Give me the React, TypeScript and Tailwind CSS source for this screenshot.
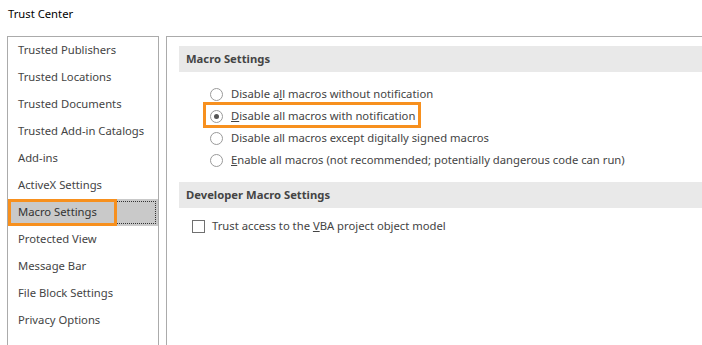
import React from "react";

const navItems = [
  "Trusted Publishers",
  "Trusted Locations",
  "Trusted Documents",
  "Trusted Add-in Catalogs",
  "Add-ins",
  "ActiveX Settings",
  "Macro Settings",
  "Protected View",
  "Message Bar",
  "File Block Settings",
  "Privacy Options",
];

function Radio({ checked }: { checked?: boolean }) {
  return (
    <span className="flex h-[13px] w-[13px] shrink-0 items-center justify-center rounded-full border border-[#9a9a9a] bg-white">
      {checked && <span className="h-[5px] w-[5px] rounded-full bg-[#555]" />}
    </span>
  );
}

function SectionHeader({ children }: { children: React.ReactNode }) {
  return (
    <div className="flex h-[26px] items-center bg-[#e9e9e9] pl-[7px] text-[11.25px] font-bold text-[#444]">
      {children}
    </div>
  );
}

export default function App() {
  return (
    <div
      className="h-[345px] w-[702px] overflow-hidden bg-white text-[11.25px] text-[#444]"
      style={{ fontFamily: '"Noto Sans", "Open Sans", sans-serif' }}
    >
      <div className="flex h-[36px] items-start pl-[8px] pt-[6px] text-black">Trust Center</div>

      <div className="flex h-[309px] gap-[7px] pl-[7px]">
        {/* left nav */}
        <div className="w-[152px] border-l border-r border-t border-[#ababab]">
          {navItems.map((item) => {
            const selected = item === "Macro Settings";
            return (
              <div
                key={item}
                className={
                  selected
                    ? "relative flex h-[27px] items-center bg-[#c9c9c9] pl-[10px] text-[#333]"
                    : "flex h-[27px] items-center pl-[10px]"
                }
              >
                {selected && (
                  <>
                    <span className="absolute inset-[2px] border border-dotted border-[#333]" />
                    <span className="absolute left-0 top-0 h-[27px] w-[109px] border-[3px] border-[#f7901e]" />
                  </>
                )}
                <span className="relative">{item}</span>
              </div>
            );
          })}
        </div>

        {/* right content */}
        <div className="flex-1 border-l border-t border-[#ababab] pl-[12px] pt-[9px]">
          <SectionHeader>Macro Settings</SectionHeader>
          <div className="flex flex-col pl-[31px] pt-[11px]">
            <div className="flex h-[22px] items-center gap-[8px]">
              <Radio />
              <span>
                Disable a<u>l</u>l macros without notification
              </span>
            </div>
            <div className="relative flex h-[22px] items-center gap-[8px]">
              <span className="absolute left-[-7px] top-[-3px] h-[26px] w-[218px] border-[3px] border-[#f7901e]" />
              <Radio checked />
              <span>
                <u>D</u>isable all macros with notification
              </span>
            </div>
            <div className="flex h-[22px] items-center gap-[8px]">
              <Radio />
              <span>Disable all macros except digitally signed macros</span>
            </div>
            <div className="flex h-[22px] items-center gap-[8px]">
              <Radio />
              <span>
                <u>E</u>nable all macros (not recommended; potentially dangerous code can run)
              </span>
            </div>
          </div>

          <div className="mt-[11px]">
            <SectionHeader>Developer Macro Settings</SectionHeader>
          </div>
          <div className="flex h-[36px] items-center gap-[7px] pl-[13px]">
            <span className="h-[13px] w-[13px] shrink-0 border border-[#707070] bg-white" />
            <span>
              Trust access to the <u>V</u>BA project object model
            </span>
          </div>
        </div>
      </div>
    </div>
  );
}
